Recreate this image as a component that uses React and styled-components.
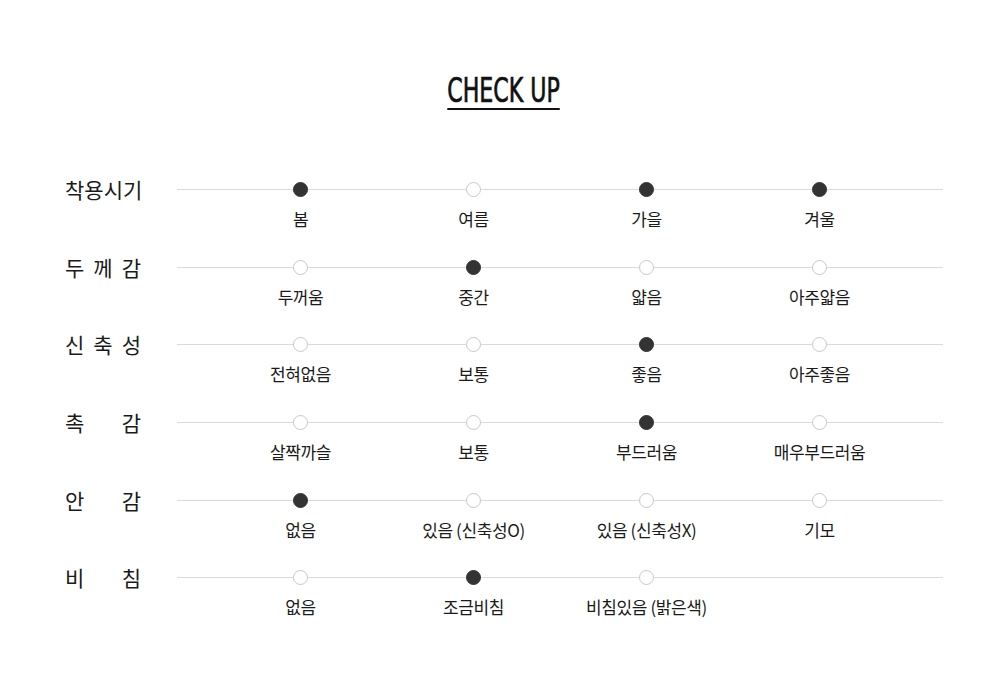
import React from "react";
import styled, { createGlobalStyle } from "styled-components";

const Global = createGlobalStyle`
  html, body { margin: 0; padding: 0; background: #fff; }
  body { font-family: "Noto Sans CJK KR", "Noto Sans", sans-serif; color: #222; }
`;

const Page = styled.div`
  width: 1000px;
  height: 698px;
  box-sizing: border-box;
  padding: 75px 57px 0 65px;
  display: flex;
  flex-direction: column;
`;

const TitleWrap = styled.div`
  display: flex;
  justify-content: center;
  margin-bottom: 72px;
`;

const Title = styled.h2`
  margin: 0;
  font-family: "Liberation Sans Narrow", "DejaVu Sans Condensed", "Liberation Sans", sans-serif;
  font-weight: 400;
  font-size: 33px;
  line-height: 32px;
  color: #111;
  -webkit-text-stroke: 0.7px #111;
  border-bottom: 2px solid #111;
  padding-bottom: 1px;
  transform: scaleX(0.745);
`;

const Rows = styled.div`
  display: flex;
  flex-direction: column;
`;

const Row = styled.div`
  display: flex;
  align-items: flex-start;
  height: 77.7px;
`;

const Label = styled.div`
  width: 76px;
  flex: none;
  height: 15px;
  line-height: 15px;
  font-size: 21px;
  color: #1a1a1a;
  text-align: justify;
  text-align-last: justify;
  white-space: nowrap;
  margin-right: 36px;
`;

const Track = styled.div`
  flex: 1;
  position: relative;
  display: grid;
  grid-template-columns: repeat(4, 1fr);
  padding: 0 37px;
  &::before {
    content: "";
    position: absolute;
    left: 0;
    right: 0;
    top: 7px;
    height: 1px;
    background: #dadada;
  }
`;

const Option = styled.div`
  position: relative;
  display: flex;
  flex-direction: column;
  align-items: center;
  gap: 11px;
`;

const Dot = styled.span`
  width: 15px;
  height: 15px;
  box-sizing: border-box;
  border-radius: 50%;
  background: ${(p) => (p.$on ? "#333" : "#fff")};
  border: 1px solid ${(p) => (p.$on ? "#333" : "#c8c8c8")};
`;

const OptText = styled.span`
  font-size: 17px;
  line-height: 22px;
  color: #1a1a1a;
  white-space: nowrap;
  letter-spacing: -0.4px;
`;

const data = [
  { label: "착용시기", opts: [["봄", 1], ["여름", 0], ["가을", 1], ["겨울", 1]] },
  { label: "두 께 감", opts: [["두꺼움", 0], ["중간", 1], ["얇음", 0], ["아주얇음", 0]] },
  { label: "신 축 성", opts: [["전혀없음", 0], ["보통", 0], ["좋음", 1], ["아주좋음", 0]] },
  { label: "촉 감", opts: [["살짝까슬", 0], ["보통", 0], ["부드러움", 1], ["매우부드러움", 0]] },
  { label: "안 감", opts: [["없음", 1], ["있음 (신축성O)", 0], ["있음 (신축성X)", 0], ["기모", 0]] },
  { label: "비 침", opts: [["없음", 0], ["조금비침", 1], ["비침있음 (밝은색)", 0]] },
];

export default function App() {
  return (
    <>
      <Global />
      <Page>
        <TitleWrap>
          <Title>CHECK UP</Title>
        </TitleWrap>
        <Rows>
          {data.map((r) => (
            <Row key={r.label}>
              <Label>{r.label}</Label>
              <Track>
                {r.opts.map(([t, on]) => (
                  <Option key={t}>
                    <Dot $on={!!on} />
                    <OptText>{t}</OptText>
                  </Option>
                ))}
              </Track>
            </Row>
          ))}
        </Rows>
      </Page>
    </>
  );
}
